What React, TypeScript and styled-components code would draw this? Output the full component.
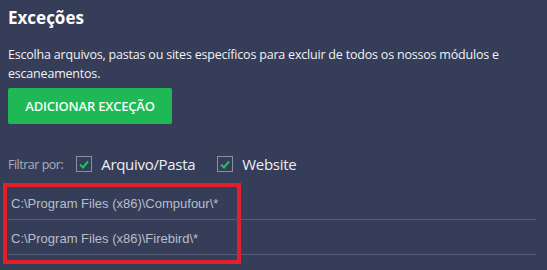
import React from 'react';
import styled, { createGlobalStyle } from 'styled-components';

const GlobalStyle = createGlobalStyle`
  html, body {
    margin: 0;
    padding: 0;
    background: #353d58;
  }
`;

const paths = [
  'C:\\Program Files (x86)\\Compufour\\*',
  'C:\\Program Files (x86)\\Firebird\\*',
];

function CheckMark() {
  return (
    <svg width="10" height="9" viewBox="0 0 10 9">
      <path d="M1 4.5 L4 7.5 L9 1.5" fill="none" stroke="#22c35e" strokeWidth="2" />
    </svg>
  );
}

export default function App() {
  return (
    <>
      <GlobalStyle />
      <Page>
        <Title>Exceções</Title>
        <Description>
          Escolha arquivos, pastas ou sites específicos para excluir de todos os nossos módulos e
          escaneamentos.
        </Description>
        <AddButton>ADICIONAR EXCEÇÃO</AddButton>

        <FilterRow>
          <FilterLabel>Filtrar por:</FilterLabel>
          <Option>
            <Box>
              <CheckMark />
            </Box>
            Arquivo/Pasta
          </Option>
          <Option>
            <Box>
              <CheckMark />
            </Box>
            Website
          </Option>
        </FilterRow>

        <List>
          {paths.map((p) => (
            <Row key={p}>{p}</Row>
          ))}
          <Highlight />
        </List>
      </Page>
    </>
  );
}

const Page = styled.div`
  width: 547px;
  height: 270px;
  box-sizing: border-box;
  padding: 6px 11px 0 8px;
  overflow: hidden;
  color: #ffffff;
  font-family: 'Open Sans', 'Liberation Sans', sans-serif;
`;

const Title = styled.h1`
  margin: 0;
  font-size: 17px;
  font-weight: 700;
  line-height: 24px;
`;

const Description = styled.p`
  margin: 15px 0 0;
  font-size: 12.5px;
  line-height: 19px;
  color: #f1f2f6;
  letter-spacing: -0.2px;
`;

const AddButton = styled.button`
  display: block;
  margin-top: 5px;
  width: 164px;
  height: 36px;
  border: none;
  border-radius: 2px;
  background: #1eb956;
  color: #f4fff7;
  font-family: inherit;
  font-size: 13px;
  font-weight: 600;
  letter-spacing: -0.2px;
  cursor: pointer;
`;

const FilterRow = styled.div`
  margin-top: 31px;
  display: flex;
  align-items: center;
  height: 18px;
`;

const FilterLabel = styled.span`
  font-size: 12.5px;
  color: #a9aebf;
  margin-right: 13px;
  letter-spacing: -0.5px;
`;

const Option = styled.label`
  display: flex;
  align-items: center;
  gap: 9px;
  font-size: 15px;
  color: #eef0f5;
  margin-right: 22px;
  letter-spacing: -0.3px;
`;

const Box = styled.span`
  width: 14px;
  height: 14px;
  border: 1px solid #8a90a3;
  display: flex;
  align-items: center;
  justify-content: center;
`;

const List = styled.div`
  position: relative;
  margin-top: 12px;
  width: 528px;
`;

const Row = styled.div`
  height: 35px;
  display: flex;
  align-items: center;
  padding-left: 3px;
  box-sizing: border-box;
  border-bottom: 1px solid #535b77;
  font-family: 'Liberation Sans', Arial, sans-serif;
  font-size: 13px;
  color: #b9bdcb;
  padding-top: 2px;
`;

const Highlight = styled.div`
  position: absolute;
  left: -5px;
  top: -2px;
  width: 238px;
  height: 81px;
  box-sizing: border-box;
  border: 4px solid #e3202a;
  pointer-events: none;
`;
